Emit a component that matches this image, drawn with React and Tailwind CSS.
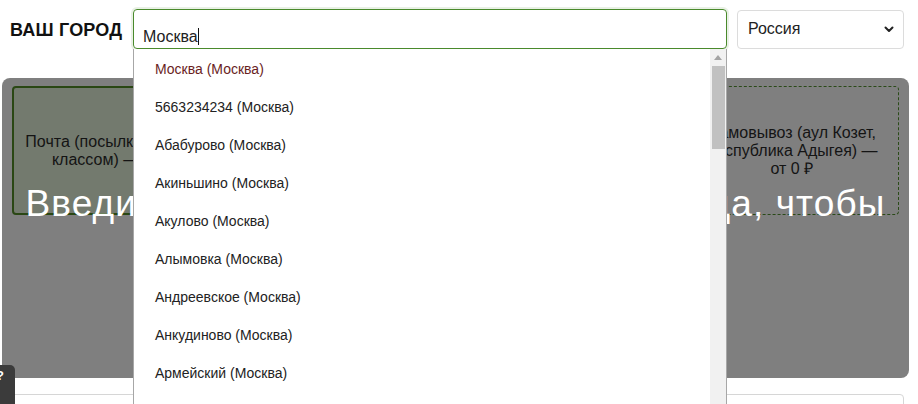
const cities = [
  'Москва (Москва)',
  '5663234234 (Москва)',
  'Абабурово (Москва)',
  'Акиньшино (Москва)',
  'Акулово (Москва)',
  'Алымовка (Москва)',
  'Андреевское (Москва)',
  'Анкудиново (Москва)',
  'Армейский (Москва)',
  'Архангельское (Москва)',
];

const cards = [
  { id: 'post', text: 'Почта (посылкой первым классом) — от 0 ₽', active: true },
  { id: 'courier', text: 'Курьер (до двери) — от 300 ₽' },
  { id: 'pvz', text: 'Пункт выдачи (СДЭК) — от 200 ₽' },
  { id: 'pickup', text: 'Самовывоз (аул Козет, Республика Адыгея) — от 0 ₽' },
];

export default function App() {
  return (
    <div className="relative h-[404px] w-[918px] overflow-hidden bg-white font-['Liberation_Sans',Arial,sans-serif] text-[#222]">
      {/* city row */}
      <div className="flex items-center pt-[9px]">
        <div className="w-[133px] pl-[10px] pt-[2px] text-[18px] font-bold tracking-[0.2px] text-[#111]">ВАШ ГОРОД</div>
        <div className="flex h-[40px] w-[594px] items-end rounded-[4px] border border-[#4a8a2c] px-[9px] pb-[2px] shadow-[0_0_0_2px_rgba(74,138,44,0.12)]">
          <span className="text-[16px] leading-[18px] text-[#222]">Москва</span>
          <span className="mb-[1px] h-[17px] w-px bg-[#111]"></span>
        </div>
        <div className="ml-[10px] flex h-[39px] w-[167px] items-center justify-between rounded-[4px] border border-[#dcdcdc] pl-[10px] pr-[9px]">
          <span className="text-[16px] text-[#222]">Россия</span>
          <svg width="10" height="7" viewBox="0 0 10 7" fill="none">
            <path d="M1.5 1.5 5 5l3.5-3.5" stroke="#222" strokeWidth="2" strokeLinecap="round" strokeLinejoin="round" />
          </svg>
        </div>
      </div>

      {/* delivery panel under overlay */}
      <div className="relative mx-[2px] mt-[29px] h-[300px] w-[907px] rounded-[8px] bg-[#7f7f7f] px-[10px] pt-[8px]">
        <div className="grid grid-cols-4 gap-[10px]">
          {cards.map((c) => (
            <div
              key={c.id}
              className={`flex h-[129px] items-center justify-center rounded-[4px] text-center text-[16px] leading-[18px] text-[#141414] ${
                c.active ? 'border-2 border-[#2a4714] bg-[#737a6e] px-[8px]' : 'border border-dashed border-[#2a4a18] px-[14px]'
              }`}
            >
              {c.text}
            </div>
          ))}
        </div>
        <div className="absolute left-0 right-0 top-[105px] text-center text-[37px] leading-[42px] tracking-[1.1px] text-white">
          <span className="whitespace-nowrap">Введите первые буквы названия города, чтобы</span>
          <br />
          увидеть способы доставки
        </div>
      </div>

      {/* field below */}
      <div className="ml-[8px] mt-[16px] h-[30px] w-[896px] rounded-[4px] border border-[#d6d6d6]"></div>

      {/* help tab */}
      <div className="absolute left-0 top-[365px] h-[40px] w-[15px] overflow-hidden rounded-tr-[5px] bg-[#3b3b3b]">
        <span className="ml-[-4px] mt-[4px] block text-[13px] font-bold leading-[14px] text-white">?</span>
      </div>

      {/* autocomplete dropdown */}
      <div className="absolute left-[133px] top-[49px] flex h-[360px] w-[594px] border-x border-[#a7a7a7] bg-white">
        <ul className="flex-1 pt-px">
          {cities.map((name, i) => (
            <li
              key={name}
              className={`flex h-[38px] items-center pl-[21px] text-[14px] ${i === 0 ? 'text-[#6a1e1e]' : 'text-[#222]'}`}
            >
              {name}
            </li>
          ))}
        </ul>
        <div className="flex w-[16px] flex-col items-center bg-[#f1f1f1]">
          <svg className="mt-[6px]" width="8" height="5" viewBox="0 0 8 5">
            <path d="M4 0 8 5H0z" fill="#a3a3a3" />
          </svg>
          <div className="mt-[6px] h-[83px] w-[13px] bg-[#c1c1c1]"></div>
        </div>
      </div>
    </div>
  );
}
